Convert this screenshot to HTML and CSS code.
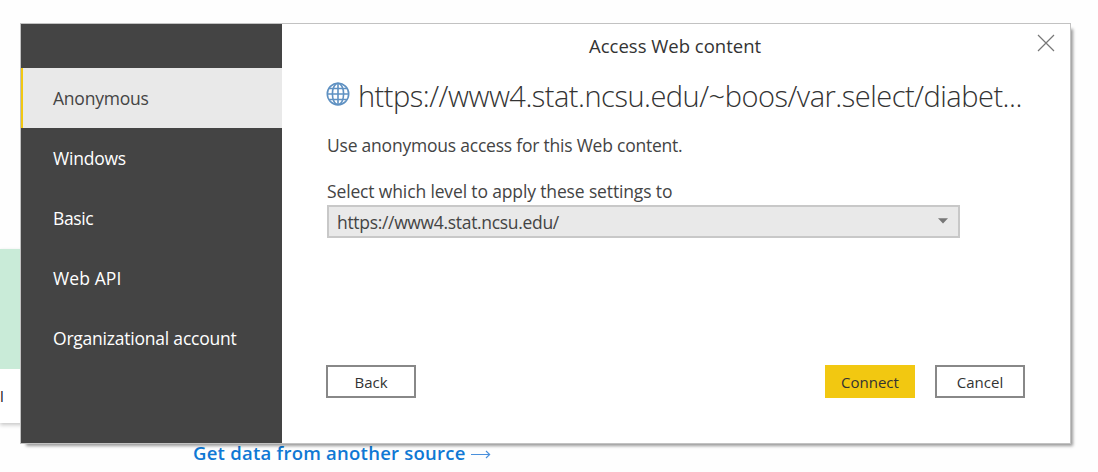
FILE: index.html
```html
<!DOCTYPE html>
<html lang="en">
<head>
<meta charset="utf-8">
<title>Access Web content</title>
<link rel="stylesheet" href="styles.css">
</head>
<body>
<div class="page">
  <div class="tile"><div class="tile-art"></div><div class="tile-label">l</div></div>
  <div class="source-link"><span>Get data from another source</span><svg class="arrow" width="20" height="10" viewBox="0 0 20 10"><path d="M0 5.5H18.5M15 2L18.7 5.5L15 9"/></svg></div>
</div>
<section class="dialog">
  <nav class="sidebar">
    <div class="item active"><span>Anonymous</span></div>
    <div class="item"><span>Windows</span></div>
    <div class="item"><span class="basic">Basic</span></div>
    <div class="item"><span class="api">Web API</span></div>
    <div class="item"><span>Organizational account</span></div>
  </nav>
  <main class="content">
    <header class="titlebar"><span class="title">Access Web content</span>
      <svg class="close" width="18" height="18" viewBox="0 0 18 18"><path d="M1 1L17 17M17 1L1 17"/></svg>
    </header>
    <div class="url-row">
      <svg class="globe" width="24" height="24" viewBox="0 0 24 24"><circle cx="12" cy="12" r="10.7"/><ellipse cx="12" cy="12" rx="5.6" ry="10.7"/><path d="M12 1.3V22.7M1.3 12H22.7M3.2 6.5H20.8M3.2 17.5H20.8"/></svg>
      <span>https://www4.stat.ncsu.edu/~boos/var.select/diabet...</span>
    </div>
    <p class="hint"><span>Use anonymous access for this Web content.</span></p>
    <p class="level"><span>Select which level to apply these settings to</span></p>
    <div class="select"><span class="value">https://www4.stat.ncsu.edu/</span><svg class="caret" width="10" height="6" viewBox="0 0 10 6"><path d="M0 0.3H10L5 5.5Z"/></svg></div>
    <footer class="buttons">
      <button class="btn back"><span>Back</span></button>
      <button class="btn primary"><span>Connect</span></button>
      <button class="btn"><span>Cancel</span></button>
    </footer>
  </main>
</section>
</body>
</html>
```
FILE: styles.css
```css
* { box-sizing: border-box; }
body { margin: 0; width: 1098px; height: 472px; overflow: hidden; position: relative; background: #fefefe; font-family: "Open Sans", "Noto Sans", sans-serif; font-size: 17.5px; letter-spacing: -0.22px; color: #444; }
span { white-space: nowrap; }
.page { height: 472px; padding-top: 249px; }
.tile { width: 40px; height: 174px; background: #fff; box-shadow: 0 2px 4px rgba(0,0,0,.22); }
.tile-art { height: 120px; background: #c9ebd8; }
.tile-label { height: 53px; padding-left: 0; font-size: 15px; line-height: 54px; color: #222; }
.source-link { display: flex; align-items: center; gap: 5px; height: 28px; margin: 15px 0 0 193px; color: #0f78d4; font-weight: 600; font-size: 18.5px; letter-spacing: 0.24px; }
.arrow { fill: none; stroke: #4a90dc; stroke-width: 1.1; margin-top: 3px; }
.dialog { position: absolute; left: 20px; top: 23px; width: 1051px; height: 421px; display: flex; background: #fff; border: 1px solid #c2c2c2; box-shadow: 4px 4px 3px -2px rgba(0,0,0,.4); }
.sidebar { width: 261px; padding-top: 44px; background: #444; flex: none; }
.item { height: 60px; padding: 0 0 0 32px; display: flex; align-items: center; color: #fff; }
.item.active { background: #e9e9e9; color: #444; border-left: 2px solid #f2c811; padding-left: 30px; }
.basic { letter-spacing: -0.4px; }
.api { letter-spacing: 0.1px; }
.content { width: 788px; display: flex; flex-direction: column; padding-left: 44px; }
.titlebar { display: flex; height: 44px; padding: 0 0 1px 263px; justify-content: space-between; align-items: center; color: #333; font-size: 18.5px; letter-spacing: 0; }
.close { stroke: #777; stroke-width: 1.2; fill: none; margin: 0 15px 5px 0; }
.url-row { display: flex; height: 54px; align-items: center; gap: 8px; font-size: 29px; letter-spacing: -0.5px; font-weight: 300; color: #333; }
.globe { fill: none; stroke: #5f91c2; stroke-width: 1.6; margin-top: -3px; flex: none; }
.hint, .level { margin: 0; height: 45px; padding: 1px 0 0 1px; display: flex; align-items: center; }
.level { height: 38px; padding-top: 9px; letter-spacing: -0.14px; }
.select { width: 633px; height: 33px; margin-left: 1px; padding: 0 10px 0 8px; border: 2px solid #c8c8c8; background: #e9e9e9; display: flex; align-items: center; justify-content: space-between; }
.value { letter-spacing: -0.32px; padding-top: 1px; }
.caret { fill: #777; margin-bottom: 1px; }
.buttons { display: flex; margin: 127px 45px 0 0; gap: 20px; }
.btn { width: 90px; height: 33px; padding: 1px 0 0; border: 2px solid #888; background: #fff; font-family: inherit; font-size: 15px; color: #333; }
.back { margin-right: auto; }
.primary { background: #f2c811; border-color: #f2c811; }
```
